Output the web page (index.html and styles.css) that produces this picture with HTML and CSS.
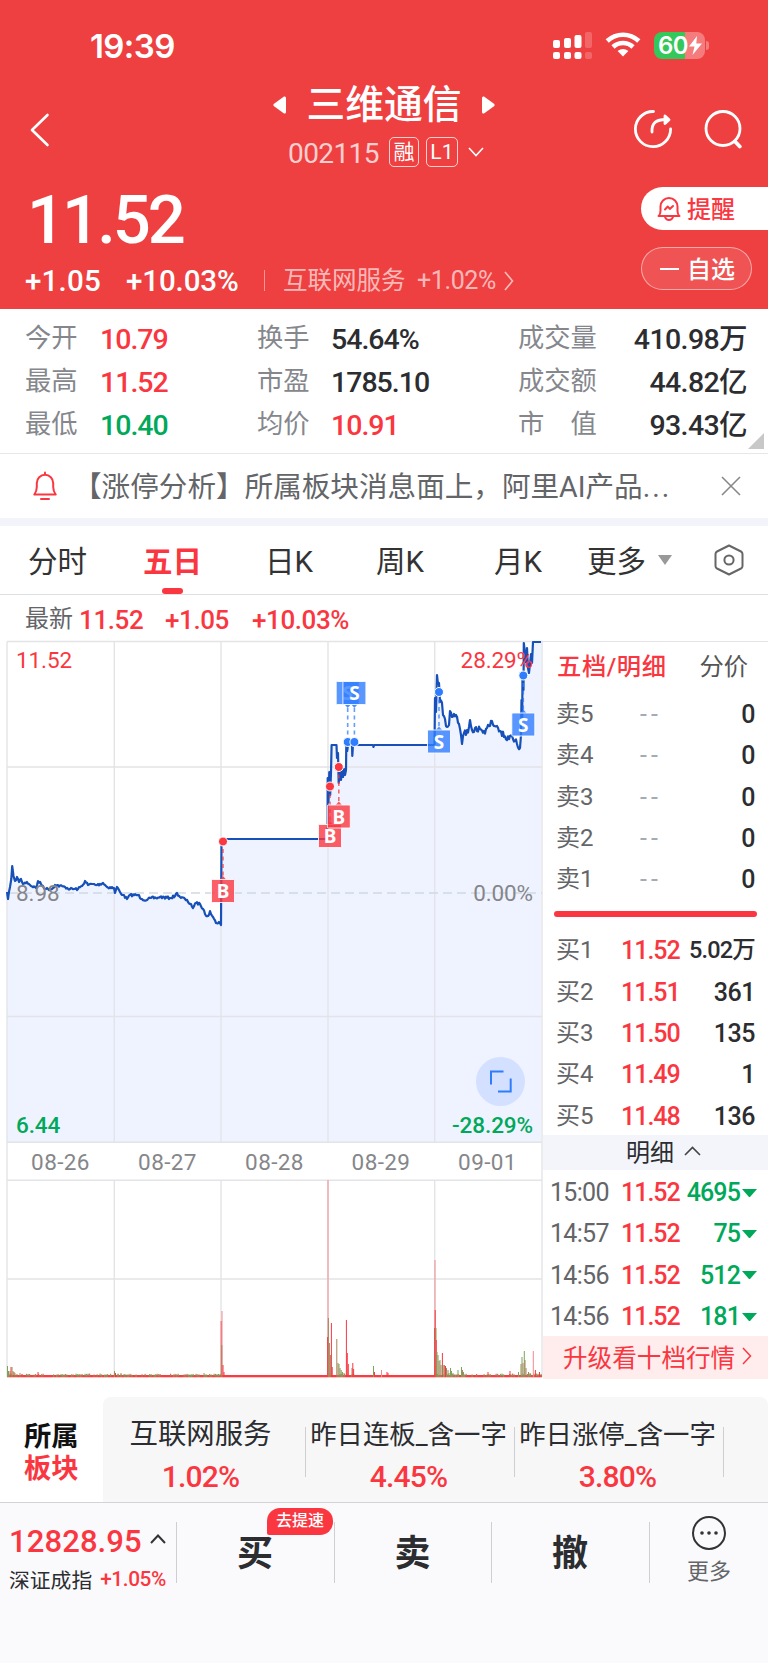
FILE: index.html
```html
<!DOCTYPE html>
<html lang="zh-CN">
<head>
  <meta charset="UTF-8">
  <meta name="viewport" content="width=device-width, initial-scale=1.0">
  <title>三维通信 002115</title>
  <link rel="stylesheet" href="styles.css">
</head>
<body>
  <header class="header">
    <div class="status">
      <span class="clock">19:39</span>
      <div class="status-icons">
        <svg width="40" height="28" viewBox="0 0 40 28" fill="#fff">
          <rect x="0" y="8" width="7" height="8" rx="2"/><rect x="11" y="6" width="7" height="10" rx="2"/><rect x="21.500" y="3" width="7" height="13" rx="2"/><rect x="32" y="0" width="7" height="16" rx="2" opacity=".2"/>
          <rect x="0" y="20" width="7" height="7" rx="2"/><rect x="11" y="20" width="7" height="7" rx="2"/><rect x="21.500" y="20" width="7" height="7" rx="2"/><rect x="32" y="20" width="7" height="7" rx="2" opacity=".2"/>
        </svg>
        <svg class="wifi" width="36" height="28" viewBox="0 0 36 28" fill="none" stroke="#fff" stroke-width="4.600">
          <path d="M2.200 10 A23 23 0 0 1 33.800 10"/>
          <path d="M8 16 A14.500 14.500 0 0 1 28 16"/>
          <path d="M18 25.500 L12.600 20 Q18 15.800 23.400 20 Z" fill="#fff" stroke="none"/>
        </svg>
        <div class="battery"><span>60</span>
          <svg width="13" height="19" viewBox="0 0 13 19" fill="#fff"><path d="M8 0 L0 10.500 H5.500 L3.500 19 L13 7.500 H7.300 Z"/></svg>
        </div>
        <i class="battery-nub"></i>
      </div>
    </div>

    <div class="nav">
      <svg class="back" width="20" height="34" viewBox="0 0 20 34" fill="none" stroke="#fff" stroke-width="2.600" stroke-linecap="round" stroke-linejoin="round"><path d="M17.500 2 L2 17 L17.500 32"/></svg>
      <div class="stock">
        <div class="stock-name">
          <svg width="13" height="18" viewBox="0 0 13 18" fill="#fff"><path d="M11 .600 Q13 0 13 2 V16 Q13 18 11 17.400 L.700 10 Q0 9 .700 8 Z"/></svg>
          <h1>三维通信</h1>
          <svg width="13" height="18" viewBox="0 0 13 18" fill="#fff"><path d="M2 .600 Q0 0 0 2 V16 Q0 18 2 17.400 L12.300 10 Q13 9 12.300 8 Z"/></svg>
        </div>
        <div class="stock-code">
          <span class="code">002115</span><span class="tag">融</span><span class="tag tag-l1">L1</span>
          <svg width="16" height="10" viewBox="0 0 16 10" fill="none" stroke="#fff" stroke-width="1.600"><path d="M1 1 L8 8.500 L15 1"/></svg>
        </div>
      </div>
      <div class="nav-icons">
        <svg width="40" height="40" viewBox="0 0 40 40" fill="none" stroke="#fff" stroke-width="2.800" stroke-linecap="round" stroke-linejoin="round">
          <path d="M20.500 2.500 A17.600 17.600 0 1 0 37.600 20"/>
          <path d="M19 23 C18.500 14 23 10.500 33 10.500"/>
          <path d="M32 7 L36 10.800 L32 14.600 Z" fill="#fff"/>
        </svg>
        <svg width="40" height="40" viewBox="0 0 40 40" fill="none" stroke="#fff" stroke-width="2.800" stroke-linecap="round">
          <circle cx="19" cy="19.500" r="17"/><path d="M31 32.500 L35.800 37.500" stroke-width="3.800"/>
        </svg>
      </div>
    </div>

    <div class="quote">
      <div class="quote-left">
        <div class="price">11.52</div>
        <div class="change">
          <b class="chg">+1.05</b><b class="pct">+10.03%</b>
          <i class="bar"></i>
          <span class="sector">互联网服务</span><span class="sector-pct">+1.02%</span>
          <svg width="10" height="20" viewBox="0 0 10 20" fill="none" stroke="#fff" stroke-opacity=".65" stroke-width="1.600"><path d="M1 1 L8.500 10 L1 19"/></svg>
        </div>
      </div>
      <div class="quote-right">
        <div class="remind">
          <svg width="24" height="26" viewBox="0 0 24 26" fill="none" stroke="#fa3741" stroke-width="2" stroke-linejoin="round" stroke-linecap="round"><path d="M1.500 20 H22.500 Q20.500 18.500 20.500 15 V10.500 A8.500 8.500 0 0 0 3.500 10.500 V15 Q3.500 18.500 1.500 20 Z"/><path d="M8 21 Q9 24 12 24 Q15 24 16 21"/><path d="M8 13.500 L10.800 10.500 L12.800 13 L16 10"/></svg>
          <span>提醒</span>
        </div>
        <div class="fav"><i></i><span>自选</span></div>
      </div>
    </div>
  </header>

  <section class="stats">
    <span>今开</span><b class="red">10.79</b><span>换手</span><b>54.64%</b><span>成交量</span><b class="right">410.98万</b>
    <span>最高</span><b class="red">11.52</b><span>市盈</span><b>1785.10</b><span>成交额</span><b class="right">44.82亿</b>
    <span>最低</span><b class="green">10.40</b><span>均价</span><b class="red">10.91</b><span>市　值</span><b class="right">93.43亿</b>
    <i class="corner"></i>
  </section>

  <section class="notice">
    <svg width="24" height="30" viewBox="0 0 24 30" fill="none" stroke="#fa3741" stroke-width="2" stroke-linejoin="round" stroke-linecap="round"><path d="M1.300 23.500 Q3.800 20 3.800 16 V12 A8.200 8.200 0 0 1 20.200 12 V16 Q20.200 20 22.700 23.500 Z"/><path d="M12 1.500 V3"/><path d="M8 28 H16"/></svg>
    <p>【涨停分析】所属板块消息面上，阿里AI产品<span>...</span></p>
    <svg class="close" width="20" height="20" viewBox="0 0 20 20" stroke="#888" stroke-width="1.600"><path d="M1 1 L19 19 M19 1 L1 19"/></svg>
  </section>

  <nav class="tabs">
    <span>分时</span><span class="active">五日</span><span>日K</span><span>周K</span><span>月K</span><span class="more">更多<i></i></span>
    <svg width="32" height="32" viewBox="0 0 32 32" fill="none" stroke="#666" stroke-width="2" stroke-linejoin="round"><path d="M16 1.500 L28 7.500 Q29.500 8.300 29.500 10 V22 Q29.500 23.700 28 24.500 L16 30.500 L4 24.500 Q2.500 23.700 2.500 22 V10 Q2.500 8.300 4 7.500 Z"/><circle cx="16" cy="16" r="4.600"/></svg>
  </nav>

  <div class="latest"><span>最新</span><b>11.52</b><b class="l2">+1.05</b><b class="l3">+10.03%</b></div>

  <main class="main">
    <svg class="chart" width="543" height="740" viewBox="0 640 543 740">
      <path id="area" fill="#eff3ff"/>
      <g stroke="#e3e4e7" stroke-width="1.400" fill="none">
        <path d="M7 641.500 H543 M7 767 H542 M7 1016.500 H542 M7 1142.300 H542 M7 1180.300 H542 M7 1279 H542"/>
        <path d="M7 641.500 V1377 M542 641.500 V1377"/>
        <path d="M114.300 641.500 V1142 M221 641.500 V1142 M328 641.500 V1142 M434.700 641.500 V1142"/>
        <path d="M114.300 1180 V1377 M221 1180 V1377 M328 1180 V1377 M434.700 1180 V1377"/>
      </g>
      <path d="M9 893 H542" stroke="#cfd9e4" stroke-width="1.600" stroke-dasharray="9 5"/>
      <path id="line" fill="none" stroke="#1650b8" stroke-width="2.200" stroke-linejoin="round"/>
      <g id="volume"></g>

      <g class="axis">
        <text x="16" y="668" class="fill-red">11.52</text>
        <text x="533" y="668" text-anchor="end" class="fill-red">28.29%</text>
        <text x="16" y="901" class="fill-grey">8.98</text>
        <text x="533" y="901" text-anchor="end" class="fill-grey">0.00%</text>
        <text x="16" y="1133" class="fill-green">6.44</text>
        <text x="533" y="1133" text-anchor="end" class="fill-green">-28.29%</text>
      </g>
      <g class="axis dates" text-anchor="middle">
        <text x="60.500" y="1170">08-26</text><text x="167.500" y="1170">08-27</text><text x="274.500" y="1170">08-28</text><text x="381" y="1170">08-29</text><text x="487.500" y="1170">09-01</text>
      </g>

      <g id="marks"></g>

      <circle cx="500.500" cy="1081.500" r="24.500" fill="#d3e0ff"/>
      <path d="M503.500 1071.500 H491 V1084.500 M498 1091.500 H510.700 V1078.500" fill="none" stroke="#2f7dff" stroke-width="2"/>
    </svg>

    <aside class="book">
      <div class="book-tabs"><b>五档/明细</b><span>分价</span></div>
      <div class="row"><span>卖5</span><em>--</em><b>0</b></div>
      <div class="row"><span>卖4</span><em>--</em><b>0</b></div>
      <div class="row"><span>卖3</span><em>--</em><b>0</b></div>
      <div class="row"><span>卖2</span><em>--</em><b>0</b></div>
      <div class="row"><span>卖1</span><em>--</em><b>0</b></div>
      <div class="ratio"></div>
      <div class="row"><span>买1</span><strong>11.52</strong><b class="wan">5.02万</b></div>
      <div class="row"><span>买2</span><strong>11.51</strong><b>361</b></div>
      <div class="row"><span>买3</span><strong>11.50</strong><b>135</b></div>
      <div class="row"><span>买4</span><strong>11.49</strong><b>1</b></div>
      <div class="row"><span>买5</span><strong>11.48</strong><b>136</b></div>
      <div class="detail-head">明细 <svg width="17" height="10" viewBox="0 0 17 10" fill="none" stroke="#444" stroke-width="1.600"><path d="M1 9 L8.500 1.500 L16 9"/></svg></div>
      <div class="row trade"><span>15:00</span><strong>11.52</strong><b>4695</b><i></i></div>
      <div class="row trade"><span>14:57</span><strong>11.52</strong><b>75</b><i></i></div>
      <div class="row trade"><span>14:56</span><strong>11.52</strong><b>512</b><i></i></div>
      <div class="row trade"><span>14:56</span><strong>11.52</strong><b>181</b><i></i></div>
      <div class="upgrade">升级看十档行情<svg width="10" height="18" viewBox="0 0 10 18" fill="none" stroke="#fa3741" stroke-width="1.500"><path d="M1 1 L8.500 9 L1 17"/></svg></div>
    </aside>
  </main>

  <section class="plates">
    <div class="plates-title"><div>所属</div><div class="red">板块</div></div>
    <div class="plates-list">
      <div class="plate plate-first"><span>互联网服务</span><b>1.02%</b></div>
      <div class="plate"><span>昨日连板_含一字</span><b>4.45%</b></div>
      <div class="plate"><span>昨日涨停_含一字</span><b>3.80%</b></div>
    </div>
  </section>

  <footer class="footer">
    <div class="index">
      <div class="index-top"><b>12828.95</b><svg width="16" height="10" viewBox="0 0 16 10" fill="none" stroke="#333" stroke-width="2"><path d="M1 9 L8 1.500 L15 9"/></svg></div>
      <div class="index-bottom"><span>深证成指</span><b>+1.05%</b></div>
    </div>
    <div class="act">买<span class="badge">去提速</span></div>
    <div class="act">卖</div>
    <div class="act">撤</div>
    <div class="foot-more">
      <svg width="36" height="36" viewBox="0 0 36 36" fill="none" stroke="#333" stroke-width="2"><circle cx="18" cy="18" r="16"/><g fill="#333" stroke="none"><circle cx="11" cy="18" r="1.800"/><circle cx="18" cy="18" r="1.800"/><circle cx="25" cy="18" r="1.800"/></g></svg>
      <span>更多</span>
    </div>
  </footer>

  <script src="chart.js"></script>
</body>
</html>
```
FILE: chart.js
```js
var seed = 7;
function rnd() {
  seed = (seed * 16807) % 2147483647;
  return seed / 2147483647;
}

// [points, jitter] per part of the session
var parts = [
  [[[7,892],[8,899],[10,887],[11.3,879],[12.2,866],[13.5,876],[15,881],[17,877],[19,882],[21,879],[23,884],[27,882],[30,885],[36,888],[38,881],[41,884],[46,889],[52,889],[55,885],[65,887],[70,889],[78,889],[82,886],[85,881],[88,885],[92,884],[97,885],[103,883],[107,887],[114,888],[115,893],[117,887],[120,892],[123,895],[127,899],[130,895],[138,895],[142,899],[147,900],[151,898],[156,898],[160,897],[170,898],[175,896],[177,893],[180,897],[185,899],[188,902],[191,904],[193,908],[196,903],[200,904],[203,909],[205,914],[208,916],[210,911],[213,917],[216,923],[219,922],[221,925]], 1.3],
  [[[221,925],[221.5,842],[223,839],[327.5,839],[327.7,778],[328.5,802],[329.3,772],[330.2,795],[331,772],[331.6,745],[336.5,745],[337,758],[338,753],[338.7,783],[340,770],[341,780],[342,771],[343,777],[344,769],[345,775],[346,770],[346.3,745],[347.2,751],[348,745],[352,745],[352.3,756],[353,745],[373,745],[373.5,747],[374.2,745],[434.5,745]], 0],
  [[[434.5,745],[435,698],[436,712],[437,675],[438,684],[439,683],[440,702],[442,703],[443,715],[445,719],[447,727],[449,725],[450,711],[452,717],[454,714],[456,715],[459,724],[461,735],[462,744],[464,733],[467,730],[469,727],[470,720],[472,730],[475,728],[477,731],[480,729],[484,731],[487,728],[490,726],[492,721],[494,726],[497,726],[500,731],[504,737],[507,740],[510,736],[513,739],[517,744],[520,748],[521,735]], 4],
  [[[521,735],[521.5,700],[522.2,720],[522.5,675],[523.5,690],[523.8,643],[526,662],[527,648],[528,668],[529,673],[531,654],[532,663],[533,642],[541,642]], 0]
];

var line = '';
parts.forEach(function (part) {
  var pts = part[0], j = part[1];
  for (var i = 0; i < pts.length; i++) {
    line += (line ? 'L' : 'M') + pts[i][0] + ' ' + pts[i][1];
    if (j && i < pts.length - 1) {
      var n = Math.floor(pts[i + 1][0] - pts[i][0]);
      for (var k = 1; k < n; k++) {
        var t = k / n;
        var x = pts[i][0] + (pts[i + 1][0] - pts[i][0]) * t;
        var y = pts[i][1] + (pts[i + 1][1] - pts[i][1]) * t + (rnd() - 0.5) * 2 * j;
        line += 'L' + x.toFixed(1) + ' ' + y.toFixed(1);
      }
    }
  }
});
document.getElementById('line').setAttribute('d', line);
document.getElementById('area').setAttribute('d', line + 'V1142H7Z');

// volume bars: x, height, colour
var R = '#fa3741', G = '#7da35b', O = '#a8845a', P = '#f28b8f';
var bars = [
  [7.5,11,G],[8.500,6,O],[10,6,G],[11,10,R],[12,10,O],[13,6,G],[14,5,R],[15,4,G],[17,3,O],[20,4,G],[22,3,R],[38,5,R],
  [114.5,6,G],[115.500,4,R],[118,3,G],[121,4,O],[125,3,G],[204,4,G],
  [221.2,56,R],[222,66,P],[221.8,32,O],[223,12,R],[224,5,R],
  [328,197,P],[327.6,40,R],[328.4,59,O],[329.4,34,O],[330.4,22,O],[331.4,54,R],[332.2,10,R],[336.8,38,O],[338,14,O],[339,13,G],[340,9,O],[341.2,7,G],[342.5,5,G],[344,4,O],[346.4,57,R],[347.3,24,R],[348.3,13,R],[352,9,O],[352.8,14,R],[353.600,8,R],[373.5,11,G],[374.5,5,R],[381.5,7,P],[387,5,R],[388,4,R],
  [435,117,P],[434.7,49,R],[435.2,67,R],[436,49,G],[436.200,37,R],[437,25,G],[438,22,G],[439,16,O],[440,17,G],[441,12,O],[442.4,24,R],[443.200,12,G],[444.4,12,O],[445.500,11,R],[446.5,9,O],[448,7,O],[449,4,G],[450.5,9,G],[451.500,6,G],[453,4,O],[458,7,G],[461.5,10,G],[462.5,7,O],[463.500,5,G],[488,5,R],[510,6,R],[518.5,5,G],[521,13,O],[522,20,G],[523,14,O],[524.3,26,G],[525,17,O],[526,9,O],[528.5,5,O],[530,4,G],[533.3,26,P],[535.4,7,R],[539.5,5,R]
];
var html = '<rect x="7" y="1375" width="535" height="2.300" fill="#fc3b40"/>';
for (var x = 8; x < 541; x += 1.5) {
  if ((x > 224 && x < 327) || (x > 354 && x < 434)) continue;
  if (rnd() > 0.45) {
    html += '<rect x="' + x + '" y="' + (1373.6 + rnd()).toFixed(1) + '" width="1.200" height="2.500" fill="' + (rnd() > 0.5 ? G : O) + '"/>';
  }
}
bars.forEach(function (b) {
  html += '<rect x="' + (b[0] - 0.5) + '" y="' + (1377 - b[1]) + '" width="1" height="' + b[1] + '" fill="' + b[2] + '"/>';
});
document.getElementById('volume').innerHTML = html;

// trade marks: letter, x, dot y, box centre y
var marks = [
  ['B', 223, 841.5, 891], ['B', 330, 786.5, 836], ['B', 338.8, 767, 816.5],
  ['S', 347.7, 742, 693], ['S', 354.4, 742, 693], ['S', 439, 692, 741.5], ['S', 523.3, 675.5, 724.5]
];
html = '';
marks.forEach(function (m) {
  var c = m[0] === 'B' ? '#fa3741' : '#2f7dff';
  var up = m[3] > m[2], e = up ? m[3] - 11 : m[3] + 11, tip = up ? e - 4 : e + 4;
  html += '<path d="M' + m[1] + ' ' + m[2] + 'V' + tip + '" stroke="' + c + '" stroke-opacity=".75" stroke-width="1.600" stroke-dasharray="4 3.500"/>'
    + '<circle cx="' + m[1] + '" cy="' + m[2] + '" r="4.500" fill="' + c + '" stroke="#fff" stroke-width="1"/>'
    + '<path d="M' + (m[1] - 3.5) + ' ' + e + 'L' + m[1] + ' ' + tip + 'L' + (m[1] + 3.5) + ' ' + e + 'Z" fill="' + c + '" fill-opacity=".85"/>'
    + '<rect x="' + (m[1] - 11.500) + '" y="' + (m[3] - 11.500) + '" width="23" height="23" rx="1" fill="' + c + '" fill-opacity=".8" stroke="#fff" stroke-opacity=".85" stroke-width="1"/>'
    + '<text class="mark" x="' + m[1] + '" y="' + (m[3] + 7) + '">' + m[0] + '</text>';
});
document.getElementById('marks').innerHTML = html;
```
FILE: styles.css
```css
* {
  box-sizing: border-box;
}
body {
  margin: 0;
  width: 768px;
  height: 1663px;
  background: #fff;
  color: #2c2d30;
  font-family: Roboto, "Noto Sans CJK SC", sans-serif;
  overflow: hidden;
}
svg {
  display: block;
  flex: none;
}
b, strong {
  font-weight: 500;
}
i, em {
  font-style: normal;
}
.red {
  color: #fa3741;
}
.green {
  color: #00a85a;
}

/* header */
.header {
  height: 309px;
  background: #ef4041;
  color: #fff;
}
.status {
  display: flex;
  justify-content: space-between;
  height: 80px;
  padding: 32px 59px 0 90px;
}
.clock {
  font-family: Inter, sans-serif;
  font-weight: 600;
  font-size: 33px;
  line-height: 28px;
  letter-spacing: -0.6px;
}
.status-icons {
  display: flex;
}
.wifi {
  margin: -1px 13px 0 12px;
}
.battery {
  display: flex;
  align-items: center;
  width: 51px;
  height: 27px;
  padding-left: 4px;
  border-radius: 8px;
  background: linear-gradient(to right, #34c759 60%, #f57c7d 60%);
  font: 600 24px/27px Inter, sans-serif;
}
.battery span {
  width: 31px;
  letter-spacing: -0.5px;
}
.battery-nub {
  width: 3px;
  height: 9px;
  margin: 9px 0 0 1px;
  border-radius: 0 3px 3px 0;
  background: #f57c7d;
}
.nav {
  display: grid;
  grid-template-columns: 200px 1fr 200px;
  height: 96px;
}
.back {
  margin: 33px 0 0 30px;
}
.stock {
  display: flex;
  flex-direction: column;
  align-items: center;
}
.stock-name {
  display: flex;
  align-items: center;
  gap: 20px;
  height: 50px;
}
.stock-name h1 {
  margin: 0;
  font-size: 38.8px;
  font-weight: 500;
  line-height: 50px;
}
.stock-code {
  display: flex;
  align-items: center;
  height: 44px;
  margin-left: 4px;
}
.code {
  font-size: 28px;
  line-height: 30px;
  letter-spacing: -0.6px;
  margin: 3px 10px 0 0;
  color: rgba(255, 255, 255, .75);
}
.tag {
  width: 30px;
  height: 30px;
  margin-right: 7px;
  border: 1px solid rgba(255, 255, 255, .75);
  border-radius: 5px;
  font-size: 21px;
  line-height: 28px;
  text-align: center;
}
.tag-l1 {
  width: 32px;
  margin-right: 10px;
}
.nav-icons {
  display: flex;
  gap: 31px;
  padding: 29px 0 0 65px;
}
.quote {
  display: flex;
  justify-content: space-between;
}
.quote-left {
  padding-left: 25px;
}
.price {
  height: 84px;
  padding-left: 2px;
  font-size: 67px;
  font-weight: 500;
  line-height: 88px;
  letter-spacing: -3px;
}
.change {
  display: flex;
  align-items: center;
  height: 41px;
  font-size: 29.5px;
}
.chg {
  width: 101px;
  letter-spacing: .2px;
}
.pct {
  width: 138px;
  letter-spacing: -0.1px;
}
.bar {
  width: 1px;
  height: 21px;
  margin-right: 18px;
  background: rgba(255, 255, 255, .45);
}
.sector {
  width: 134px;
  margin-top: -4px;
  font-size: 24.5px;
  color: rgba(255, 255, 255, .65);
}
.sector-pct {
  width: 87px;
  font-size: 25px;
  letter-spacing: -0.4px;
  color: rgba(255, 255, 255, .65);
}
.remind, .fav {
  display: flex;
  align-items: center;
  font-size: 24px;
  font-weight: 500;
}
.remind span, .fav span {
  margin-top: -3px;
}
.remind {
  width: 127px;
  height: 43px;
  margin-top: 11px;
  padding-left: 16px;
  gap: 6px;
  border-radius: 22px 0 0 22px;
  background: #fff;
  color: #fa3741;
}
.fav {
  width: 111px;
  height: 43px;
  margin-top: 17px;
  padding-left: 18px;
  border: 1px solid rgba(255, 255, 255, .5);
  border-radius: 22px;
  background: rgba(255, 255, 255, .1);
}
.fav i {
  width: 19px;
  height: 2px;
  margin-right: 8px;
  background: #fff;
}

/* stats */
.stats {
  position: relative;
  display: grid;
  grid-template-columns: 75px 157px 74px 187px 1fr auto;
  grid-auto-rows: 43px;
  height: 145px;
  padding: 8px 21px 0 25px;
  border-bottom: 1px solid #e6e7ea;
  line-height: 45px;
}
.stats span {
  font-size: 26.3px;
  color: #85878c;
  line-height: 42px;
}
.stats b {
  font-size: 28.5px;
  letter-spacing: -1px;
}
.stats .right {
  text-align: right;
  letter-spacing: -0.6px;
}
.corner {
  position: absolute;
  right: 4px;
  bottom: 4px;
  border-left: 16px solid transparent;
  border-bottom: 16px solid #c8c8c8;
}
.notice {
  display: flex;
  align-items: center;
  height: 64px;
  padding: 0 27px 0 33px;
  color: #636568;
}
.notice p {
  flex: 1;
  margin: -3px 0 0 16px;
  font-size: 28.6px;
  white-space: nowrap;
}
.notice p span {
  letter-spacing: 2px;
}

/* tabs */
.tabs {
  display: grid;
  grid-template-columns: 115px 122px 111px 118px 93px 126px 32px;
  align-items: center;
  height: 77px;
  padding-left: 28px;
  border-top: 8px solid #f2f4fa;
  border-bottom: 1px solid #dfe0e3;
  font-size: 29.5px;
  color: #333;
}
.tabs span {
  margin-top: -3px;
}
.active {
  position: relative;
  font-weight: 700;
  color: #fa3741;
}
.active::after {
  content: "";
  position: absolute;
  left: 19px;
  bottom: -14px;
  width: 21px;
  height: 6px;
  border-radius: 3px;
  background: #fa3741;
}
.more {
  display: flex;
  align-items: center;
}
.more i {
  margin: 3px 0 0 12px;
  border: 7px solid transparent;
  border-top: 10px solid #999;
  border-bottom: 0;
}
.latest {
  display: flex;
  height: 45px;
  padding-left: 25px;
  font-size: 26px;
  line-height: 51px;
  color: #fa3741;
}
.latest span {
  width: 54px;
  font-size: 24px;
  line-height: 48px;
  color: #636568;
}
.latest b {
  width: 86px;
  letter-spacing: -0.4px;
}
.latest b.l2 {
  width: 87px;
}

/* chart */
.main {
  display: grid;
  grid-template-columns: 543px 1fr;
  height: 740px;
}
.axis {
  font-size: 22.5px;
  letter-spacing: -0.1px;
}
.axis .fill-red {
  fill: #fa3741;
}
.axis .fill-green {
  fill: #00a85a;
  font-weight: 500;
}
.axis .fill-grey {
  fill: #85868a;
}
.dates {
  fill: #85868a;
  letter-spacing: .4px;
}
.mark {
  font: 700 19px "Noto Sans", sans-serif;
  fill: #fff;
  text-anchor: middle;
}

/* order book */
.book {
  border-top: 1px solid #e3e4e7;
  margin-top: 1px;
}
.book-tabs {
  display: flex;
  justify-content: space-between;
  height: 52px;
  padding: 0 20px 0 14px;
  font-size: 24.3px;
  line-height: 50px;
  color: #555;
}
.book-tabs b {
  color: #fa3741;
  letter-spacing: .6px;
}
.row {
  display: grid;
  grid-template-columns: 65px 60px 1fr;
  height: 41.3px;
  padding: 0 13px 0 13px;
  font-size: 25px;
  line-height: 41px;
}
.row span {
  font-size: 24px;
  color: #636568;
}
.row em {
  padding-left: 19px;
  letter-spacing: 4px;
  color: #a3abb5;
}
.row strong {
  color: #fa3741;
  letter-spacing: -1px;
}
.row b {
  text-align: right;
  letter-spacing: -0.5px;
}
.row .wan {
  font-size: 23.5px;
  letter-spacing: -0.8px;
  white-space: nowrap;
}
.ratio {
  height: 6px;
  margin: 11px 11px 13px;
  border-radius: 3px;
  background: #fa3741;
}
.detail-head {
  display: flex;
  align-items: center;
  justify-content: center;
  gap: 10px;
  height: 35px;
  margin: -2px 0 2px;
  padding: 0 0 3px 16px;
  background: #f3f5fa;
  font-size: 24px;
}
.row.trade {
  grid-template-columns: 71px 60px 1fr 15px;
  padding: 0 11px 0 7px;
}
.trade span {
  font-size: 25px;
  letter-spacing: -0.7px;
}
.trade b {
  margin-right: 2px;
  color: #00a85a;
  letter-spacing: -0.9px;
}
.trade i {
  align-self: center;
  border: 7.5px solid transparent;
  border-top: 8px solid #00a85a;
  border-bottom: 0;
}
.upgrade {
  display: flex;
  align-items: center;
  gap: 7px;
  height: 42.5px;
  margin-top: -1px;
  padding: 0 0 3px 20px;
  background: #ffeced;
  color: #fa3741;
  font-size: 24.6px;
}

/* plates */
.plates {
  display: flex;
  height: 123px;
  padding-top: 17px;
  border-bottom: 1px solid #d2d3d6;
}
.plates-title {
  width: 103px;
  padding: 24px 0 0 24px;
  font-size: 27.3px;
  font-weight: 700;
  line-height: 32px;
  color: #111;
}
.plates-title .red {
  color: #fa3741;
}
.plates-list {
  flex: 1;
  display: grid;
  grid-template-columns: 203px 209px 209px;
  border-radius: 8px 8px 0 0;
  background: #f7f7f8;
}
.plate {
  position: relative;
  padding: 18px 4px 0 0;
  text-align: center;
  font-size: 26.4px;
  white-space: nowrap;
}
.plate::after {
  content: "";
  position: absolute;
  right: 0;
  top: 30px;
  width: 1px;
  height: 50px;
  background: #cfcfd2;
}
.plate span {
  display: block;
  line-height: 40px;
}
.plate-first span {
  font-size: 28.4px;
}
.plate b {
  display: block;
  font-size: 30px;
  line-height: 43px;
  letter-spacing: -0.8px;
  color: #fa3741;
}
.plate-first {
  padding-right: 8px;
}

/* footer */
.footer {
  display: grid;
  grid-template-columns: 177px 158px 157px 158px 1fr;
  height: 160px;
  background: #fafafc;
}
.index {
  padding: 16px 0 0 9px;
}
.index-top {
  display: flex;
  align-items: center;
  gap: 8px;
  height: 44px;
  font-size: 31px;
  letter-spacing: .1px;
  color: #fa3741;
}
.index-top svg {
  margin-top: -4px;
}
.index-bottom {
  display: flex;
  align-items: center;
  height: 31px;
  gap: 8px;
  font-size: 20.8px;
  white-space: nowrap;
}
.index-bottom b {
  color: #fa3741;
  letter-spacing: -0.4px;
}
.act {
  position: relative;
  height: 104px;
  padding-right: 2px;
  font-size: 36px;
  font-weight: 700;
  line-height: 103px;
  text-align: center;
}
.act::before {
  content: "";
  position: absolute;
  left: -1px;
  top: 19px;
  width: 1px;
  height: 61px;
  background: #cfcfd2;
}
.badge {
  position: absolute;
  left: 90px;
  top: 5px;
  width: 66px;
  height: 27px;
  border-radius: 13px 13px 13px 2px;
  background: #fa3741;
  color: #fff;
  font-size: 16px;
  font-weight: 500;
  line-height: 25px;
}
.foot-more {
  position: relative;
  display: flex;
  flex-direction: column;
  align-items: center;
  padding-top: 12px;
  font-size: 22px;
  line-height: 42px;
  color: #636568;
}
.foot-more::before {
  content: "";
  position: absolute;
  left: -1px;
  top: 19px;
  width: 1px;
  height: 61px;
  background: #cfcfd2;
}
```
